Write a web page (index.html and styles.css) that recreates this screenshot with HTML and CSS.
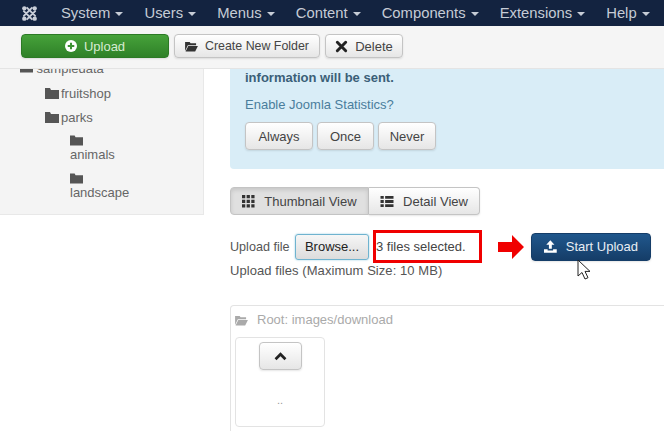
FILE: index.html
```html
<!DOCTYPE html>
<html lang="en">
<head>
  <meta charset="UTF-8" />
  <title>Media</title>
  <link rel="stylesheet" href="styles.css">
</head>
<body>
  <nav class="navbar">
    <svg class="logo" viewBox="0 0 18 18" width="17" height="17" aria-hidden="true">
      <g fill="none" stroke="#c9ced8" stroke-width="2" stroke-linecap="round">
        <path d="M3 6.500L11.500 15M6.500 3L15 11.500M15 6.500L6.500 15M11.500 3L3 11.500"/>
      </g>
      <g fill="#c9ced8">
        <circle cx="3.500" cy="3.500" r="2.300"/><circle cx="14.500" cy="3.500" r="2.300"/>
        <circle cx="3.500" cy="14.500" r="2.300"/><circle cx="14.500" cy="14.500" r="2.300"/>
      </g>
    </svg>
    <ul class="menu">
      <li>System <i class="caret"></i></li>
      <li>Users <i class="caret"></i></li>
      <li>Menus <i class="caret"></i></li>
      <li>Content <i class="caret"></i></li>
      <li>Components <i class="caret"></i></li>
      <li>Extensions <i class="caret"></i></li>
      <li>Help <i class="caret"></i></li>
    </ul>
  </nav>

  <div class="toolbar">
    <button class="btn btn-success">
      <svg viewBox="0 0 14 14" width="12" height="12"><circle cx="7" cy="7" r="7" fill="#fff"/><path d="M7 3.200v7.600M3.200 7h7.600" stroke="#3d9233" stroke-width="2.400"/></svg>
      Upload
    </button>
    <button class="btn btn-folder">
      <svg viewBox="0 0 14 12" width="13" height="11"><path d="M0 1h5l1 1.500h6v2H3L0 11z M3.500 5.500H14L11 11.500H0.500z" fill="#333"/></svg>
      Create New Folder
    </button>
    <button class="btn btn-delete">
      <svg viewBox="0 0 14 14" width="13" height="13"><path d="M2.500 2.500l9 9M11.500 2.500l-9 9" stroke="#222" stroke-width="3.200" stroke-linecap="round"/></svg>
      Delete
    </button>
  </div>

  <div class="main">
    <aside class="sidebar">
      <ul class="tree">
        <li class="tree-root"><svg class="folder" viewBox="0 0 14 11" width="13" height="11"><path d="M0 0h5l1 2h8v9H0z"/></svg> sampledata</li>
        <li class="tree-sub"><svg class="folder" viewBox="0 0 14 11" width="14" height="11"><path d="M0 0h5l1 2h8v9H0z"/></svg>fruitshop</li>
        <li class="tree-sub"><svg class="folder" viewBox="0 0 14 11" width="14" height="11"><path d="M0 0h5l1 2h8v9H0z"/></svg>parks</li>
        <li class="tree-leaf"><svg class="folder" viewBox="0 0 14 11" width="13" height="11"><path d="M0 0h5l1 2h8v9H0z"/></svg><span>animals</span></li>
        <li class="tree-leaf"><svg class="folder" viewBox="0 0 14 11" width="13" height="11"><path d="M0 0h5l1 2h8v9H0z"/></svg><span>landscape</span></li>
      </ul>
    </aside>

    <section class="content">
      <div class="alert">
        <p class="alert-title">information will be sent.</p>
        <p class="alert-link">Enable Joomla Statistics?</p>
        <div class="alert-actions">
          <button class="btn">Always</button>
          <button class="btn">Once</button>
          <button class="btn">Never</button>
        </div>
      </div>

      <div class="view-group">
        <button class="btn view-active">
          <svg viewBox="0 0 14 14" width="13" height="13" fill="#333"><path d="M0 0h3.500v3.500H0zM5 0h3.500v3.500H5zM10 0h3.500v3.500H10zM0 5h3.500v3.500H0zM5 5h3.500v3.500H5zM10 5h3.500v3.500H10zM0 10h3.500v3.500H0zM5 10h3.500v3.500H5zM10 10h3.500v3.500H10z"/></svg>
          Thumbnail View
        </button>
        <button class="btn view-detail">
          <svg viewBox="0 0 14 14" width="14" height="13" fill="#333"><path d="M0 1h3.500v3H0zM5 1h9v3H5zM0 5.500h3.500v3H0zM5 5.500h9v3H5zM0 10h3.500v3H0zM5 10h9v3H5z"/></svg>
          Detail View
        </button>
      </div>

      <div class="upload-row">
        <span class="upload-label">Upload file</span>
        <button class="browse">Browse...</button>
        <span class="file-status">3 files selected.</span>
        <svg class="red-arrow" viewBox="0 0 26 24" width="26" height="24"><path d="M0 7h14V0l12 12-12 12v-7H0z" fill="#f00000"/></svg>
        <button class="btn btn-start">
          <svg viewBox="0 0 14 14" width="13" height="13" fill="#fff"><path d="M7 0l4.500 5H8.600v4.500H5.400V5H2.500zM0 10h4v1.500h6V10h4v4H0z"/></svg>
          Start Upload
          <svg class="cursor" viewBox="0 0 14 22" width="14" height="22"><path d="M1 1v16l4-3.500 3 6.500 3-1.300-3-6.300h5z" fill="#fff" stroke="#222" stroke-width="1"/></svg>
        </button>
      </div>
      <p class="upload-help">Upload files (Maximum Size: 10 MB)</p>

      <div class="browser">
        <div class="crumb">
          <svg viewBox="0 0 14 12" width="13" height="11"><path d="M0 1h5l1 1.500h6v2H3L0 11z M3.500 5.500H14L11 11.500H0.500z" fill="#aaa"/></svg>
          Root: images/download
        </div>
        <div class="thumb">
          <button class="btn btn-up">
            <svg viewBox="0 0 14 10" width="13" height="9"><path d="M1.500 8L7 2.500 12.500 8" fill="none" stroke="#222" stroke-width="3"/></svg>
          </button>
          <span class="thumb-name">..</span>
        </div>
      </div>
    </section>
  </div>
</body>
</html>
```

FILE: styles.css
```css
* {
  box-sizing: border-box;
}

html, body {
  height: 431px;
  overflow: hidden;
}

body {
  margin: 0;
  font-family: "Liberation Sans", Arial, sans-serif;
  font-size: 13px;
  color: #555;
  background: #fff;
}

p {
  margin: 0;
}

/* top nav */
.navbar {
  height: 26px;
  background: #132340;
  display: flex;
  align-items: center;
  padding-left: 21px;
}

.logo {
  margin-right: 23px;
}

.menu {
  list-style: none;
  margin: 0;
  padding: 0;
  display: flex;
  gap: 21px;
  color: #c6ccd6;
  font-size: 14.8px;
  white-space: nowrap;
}

.caret {
  display: inline-block;
  width: 0;
  height: 0;
  margin-left: 1px;
  vertical-align: middle;
  border-top: 4px solid #c6ccd6;
  border-left: 4px solid transparent;
  border-right: 4px solid transparent;
}

/* buttons */
.btn {
  height: 28px;
  padding: 0 12px;
  display: inline-flex;
  align-items: center;
  justify-content: center;
  gap: 6px;
  font-family: inherit;
  font-size: 13px;
  color: #444;
  white-space: nowrap;
  background: linear-gradient(#fff, #e6e6e6);
  border: 1px solid #c4c4c4;
  border-radius: 4px;
  box-shadow: 0 1px 2px rgba(0,0,0,0.1);
}

.toolbar {
  height: 43px;
  padding: 8px 0 0 21px;
  display: flex;
  gap: 5px;
  background: #f5f5f5;
  border-bottom: 1px solid #e4e4e4;
}

.toolbar .btn {
  height: 24px;
  padding: 0;
  gap: 7px;
}

.btn-success {
  width: 148px;
  color: #d6ecd2;
  background: linear-gradient(#46a23a, #2f8128);
  border-color: #2c7a25;
}

.btn-folder {
  width: 146px;
  font-size: 12.4px;
}

.btn-delete {
  width: 78px;
}

/* layout */
.main {
  display: flex;
  height: 363px;
  overflow: hidden;
}

.sidebar {
  width: 204px;
  height: 146px;
  flex-shrink: 0;
  background: #f4f4f4;
  border-right: 1px solid #e8e8e8;
  border-bottom: 1px solid #e8e8e8;
  overflow: hidden;
}

.tree {
  list-style: none;
  margin: -8px 0 0;
  padding: 0;
  color: #666;
}

.folder {
  fill: #555;
}

.tree-root {
  height: 16px;
  line-height: 16px;
  padding-left: 20px;
}

.tree-sub {
  height: 24px;
  padding-left: 45px;
  display: flex;
  align-items: center;
  gap: 2px;
  margin-top: 4px;
}

.tree-sub + .tree-sub {
  margin-top: 0;
}

.tree-leaf {
  padding-left: 70px;
  height: 38px;
  display: flex;
  flex-direction: column;
  align-items: flex-start;
  padding-top: 6px;
}

.tree-leaf span {
  line-height: 17px;
}

.content {
  flex: 1;
  min-width: 0;
  margin-left: 26px;
}

.alert {
  height: 100px;
  padding: 1px 15px 0;
  background: #d9edf7;
  border-bottom-left-radius: 4px;
  color: #3a6a8a;
}

.alert-title {
  font-weight: bold;
  line-height: 16px;
  color: #3b5f78;
}

.alert-link {
  margin-top: 11px;
  line-height: 16px;
  color: #4a7d9c;
}

.alert-actions {
  margin-top: 9px;
  display: flex;
  gap: 4px;
}

.alert-actions .btn:nth-child(1) { width: 68px; }
.alert-actions .btn:nth-child(2) { width: 57px; }
.alert-actions .btn:nth-child(3) { width: 58px; }

.view-group {
  margin-top: 18px;
  display: flex;
}

.view-group .btn {
  height: 28px;
  padding: 0;
  gap: 9px;
}

.view-active {
  width: 139px;
  background: #e0e0e0;
  border-radius: 4px 0 0 4px;
  box-shadow: inset 0 2px 4px rgba(0,0,0,0.12);
}

.view-detail {
  width: 111px;
  border-left: 0;
  border-radius: 0 4px 4px 0;
}

/* upload */
.upload-row {
  margin-top: 15px;
  height: 33px;
  display: flex;
  align-items: center;
  white-space: nowrap;
}

.upload-label {
  width: 65px;
  font-size: 12.6px;
}

.browse {
  width: 74px;
  height: 26px;
  padding: 0;
  font-family: inherit;
  font-size: 13px;
  color: #222;
  background: linear-gradient(#f6f6f6, #dcdcdc);
  border: 1px solid #6fb3cf;
  border-radius: 3px;
  box-shadow: 0 0 2px #8fc8e0;
}

.file-status {
  width: 109px;
  height: 33px;
  margin-left: 4px;
  display: flex;
  align-items: center;
  border: 3px solid #f00000;
  color: #444;
}

.red-arrow {
  margin-left: 16px;
}

.btn-start {
  position: relative;
  width: 120px;
  height: 28px;
  margin-left: 7px;
  gap: 9px;
  color: #e8eef4;
  background: linear-gradient(#20578c, #153d68);
  border-color: #153d68;
}

.cursor {
  position: absolute;
  left: 45px;
  top: 25px;
}

.upload-help {
  line-height: 15px;
  letter-spacing: 0.06px;
}

.browser {
  margin-top: 27px;
  height: 140px;
  margin-right: -10px;
  padding: 6px 4px 0;
  border: 1px solid #e3e3e3;
  border-bottom: 0;
  border-top-left-radius: 4px;
}

.crumb {
  display: flex;
  align-items: center;
  gap: 9px;
  line-height: 16px;
  color: #aaa;
}

.thumb {
  margin-top: 9px;
  width: 90px;
  height: 90px;
  padding-top: 4px;
  display: flex;
  flex-direction: column;
  align-items: center;
  border: 1px solid #e3e3e3;
  border-radius: 4px;
}

.btn-up {
  width: 43px;
  padding: 0;
}

.thumb-name {
  margin-top: 24px;
  color: #999;
  font-size: 11px;
}
```
